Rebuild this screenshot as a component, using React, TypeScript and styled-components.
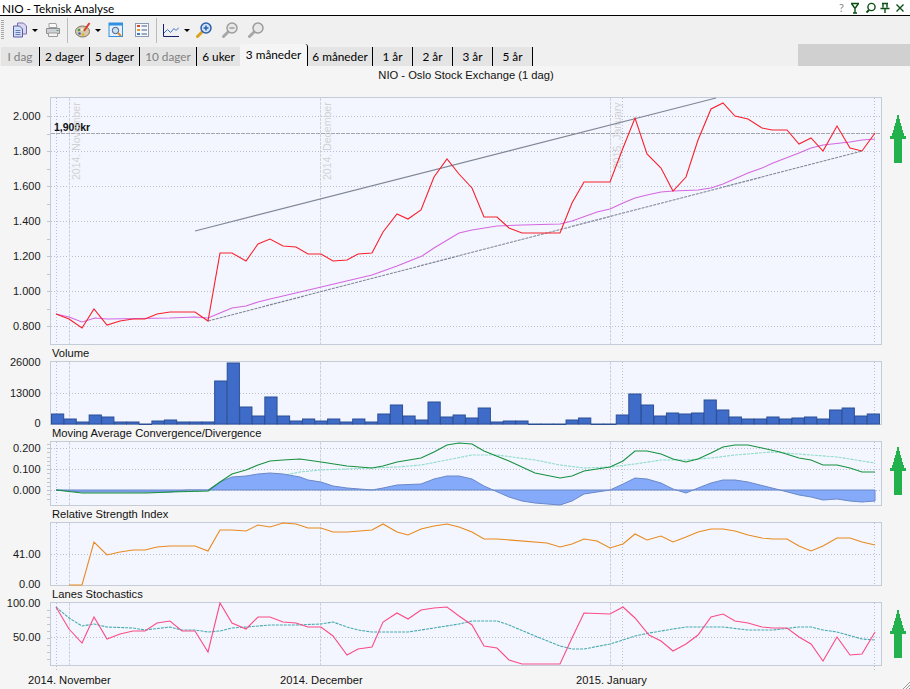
import React from "react";
import styled, { createGlobalStyle } from "styled-components";

const GlobalStyle = createGlobalStyle`
  html, body {
    margin: 0;
    padding: 0;
    background: #f5f5f5;
  }
`;

const Page = styled.div`
  width: 910px;
  height: 689px;
  overflow: hidden;
  position: relative;
  background: #f5f5f5;
  font-family: "Liberation Sans", Arial, sans-serif;
  font-size: 11.2px;
  color: #111;
`;

const TitleBar = styled.div`
  height: 15px;
  display: flex;
  align-items: center;
  background: #fff;
  border-bottom: 1px solid #000;
  padding-left: 2px;
  font-family: Lato, sans-serif;
  font-size: 11.7px;
  color: #000;
`;

const TitleText = styled.span`
  flex: 1;
`;

const WindowButtons = styled.div`
  display: flex;
  align-items: center;
  gap: 3px;
  padding-right: 4px;
`;

const HelpMark = styled.span`
  color: #888;
  font-size: 11px;
`;

const WinIcon = styled.svg<{ $left?: number }>`
  width: 12px;
  height: 12px;
  margin-left: ${(p) => p.$left ?? 0}px;
  fill: none;
  stroke: #0b4f12;
  stroke-width: 1.4;
`;

const Toolbar = styled.div`
  height: 28px;
  display: flex;
  align-items: center;
  background: #f0f0f0;
`;

const Grip = styled.div`
  width: 3px;
  height: 20px;
  margin-left: 1px;
  background: repeating-linear-gradient(to bottom, #a8a8a8 0 1px, transparent 1px 2px);
`;

const ToolIcon = styled.svg<{ $left: number }>`
  width: 16px;
  height: 16px;
  flex: none;
  margin-left: ${(p) => p.$left}px;
`;

const Caret = styled.span<{ $left: number }>`
  width: 0;
  height: 0;
  flex: none;
  margin-left: ${(p) => p.$left}px;
  border-left: 3px solid transparent;
  border-right: 3px solid transparent;
  border-top: 3px solid #000;
`;

const ToolSeparator = styled.div<{ $left: number }>`
  width: 1px;
  height: 25px;
  flex: none;
  margin-left: ${(p) => p.$left}px;
  background: #bcbcbc;
`;

const TabStrip = styled.div`
  height: 22px;
  display: flex;
  align-items: flex-end;
  padding-left: 1px;
  background: #f0f0f0;
`;

const Tab = styled.div<{ $width: number; $active?: boolean; $dim?: boolean; $noLine?: boolean }>`
  box-sizing: border-box;
  width: ${(p) => p.$width}px;
  height: ${(p) => (p.$active ? 22 : 19)}px;
  display: flex;
  align-items: center;
  justify-content: center;
  font-family: Lato, sans-serif;
  font-size: 11.8px;
  white-space: nowrap;
  background: ${(p) => (p.$active ? "#f5f5f5" : "#e4e4e4")};
  color: ${(p) => (p.$dim ? "#808080" : "#000")};
  border-right: ${(p) => (p.$noLine ? "none" : "1.5px solid #000")};
  border-radius: ${(p) => (p.$active ? "3px 3px 0 0" : "0")};
  padding-bottom: ${(p) => (p.$active ? 2 : 0)}px;
`;

const TabFiller = styled.div`
  width: 112px;
  height: 22px;
  margin-left: auto;
  background: #d0d0d0;
`;

const ChartTitle = styled.div`
  height: 31px;
  width: 832px;
  margin-left: 50px;
  padding-top: 2px;
  box-sizing: border-box;
  text-align: center;
  line-height: 14px;
  color: #111;
`;

const PanelRow = styled.div`
  display: grid;
  grid-template-columns: 50px 832px 28px;
`;

const Axis = styled.svg`
  width: 50px;
  display: block;
  overflow: visible;
  font-family: "Liberation Sans", Arial, sans-serif;
  font-size: 11px;
  fill: #1a1a1a;
`;

const Plot = styled.svg`
  width: 830px;
  display: block;
  overflow: visible;
  box-sizing: content-box;
  border: 1px solid #c4ccd9;
  background: #f3f6fe;
  font-family: "Liberation Sans", Arial, sans-serif;
`;

const ArrowCell = styled.div<{ $top: number }>`
  padding-top: ${(p) => p.$top}px;
  padding-left: 8px;
`;

const UpArrow = styled.svg`
  display: block;
  width: 16px;
  height: 48px;
  fill: #22b14c;
`;

const PanelLabel = styled.div`
  height: 16px;
  line-height: 16px;
  padding-left: 52px;
  color: #111;
`;

const DateAxis = styled.div`
  display: grid;
  grid-template-columns: 252px 296px auto;
  padding: 7px 0 0 28px;
  line-height: 14px;
  color: #111;
`;

const ResizeGrip = styled.svg`
  position: absolute;
  right: 0;
  bottom: 0;
  width: 7px;
  height: 7px;
  stroke: #9a9a9a;
  stroke-width: 1;
`;

const price =
  "56,314 69,319 82,328 94,309 107,325 120,321 133,319 145,319 157,314 170,312 182,312 195,312 208,321 220,253 232,253 246,261 258,244 270,239 283,246 296,247 308,254 321,254 333,261 347,260 358,254 372,253 383,232 397,214 408,219 421,210 434,177 447,159 459,174 472,188 484,217 497,217 509,228 522,233 560,233 572,203 584,182 610,182 623,148 635,118 647,154 661,168 673,191 686,177 698,140 711,109 723,103 735,116 748,119 762,128 772,130 787,130 799,144 811,138 823,151 837,126 850,148 862,151 875,133";
const priceAvg =
  "56,314 69,317 82,322 95,318 107,319 170,318 195,317 208,318 220,313 232,308 246,306 258,302 270,299 283,296 300,292 372,275 397,266 422,256 434,248 459,233 472,230 497,226 522,225 560,224 572,221 597,212 610,209 623,203 635,198 647,195 661,192 673,191 698,190 711,188 723,184 748,173 762,168 773,163 799,153 811,148 823,145 850,142 862,140 875,139";
const macdArea =
  "56,490 82,492 170,492 187,490 208,490 220,482 232,477 246,476 258,474 270,473 283,474 300,477 308,480 321,482 333,486 347,488 372,490 383,488 397,485 421,484 434,479 447,476 459,476 472,479 484,486 493,490 509,497 522,501 535,503 560,505 572,501 584,494 597,492 610,490 623,484 635,478 647,479 661,483 673,489 686,493 698,488 711,483 723,480 735,480 748,482 780,490 799,495 811,497 823,500 837,499 850,501 862,502 875,501 875,490 56,490";
const macdLine =
  "56,490 82,493 103,493 147,493 170,492 208,491 220,482 232,474 246,470 258,465 270,461 283,460 300,459 321,462 347,466 372,468 383,466 397,462 421,458 434,452 447,445 459,443 472,444 484,451 509,461 535,473 560,478 572,476 584,471 610,467 623,461 635,451 647,451 661,454 673,459 686,462 698,459 711,453 723,447 735,445 748,445 762,448 780,452 799,458 811,460 823,465 837,465 850,468 862,472 875,472";
const macdSignal =
  "56,490 147,492 208,491 232,485 270,478 300,472 321,470 347,469 372,468 397,467 421,465 447,460 472,455 497,455 535,460 560,465 584,468 610,467 635,464 661,460 686,460 711,458 735,455 772,452 811,455 837,457 875,463";
const rsi =
  "69,585 82,585 94,542 107,555 120,552 133,550 145,550 157,547 170,546 195,546 208,551 220,530 232,530 246,531 258,525 270,527 283,523 296,524 308,528 321,528 333,532 347,532 372,530 383,524 397,532 408,535 421,529 434,526 447,524 459,527 472,532 484,539 497,539 547,543 560,547 572,544 584,539 597,541 610,548 623,544 635,534 647,540 661,536 673,542 686,537 698,532 711,529 723,529 735,531 748,535 762,538 773,539 787,539 799,546 811,551 823,546 837,538 850,538 862,542 875,545";
const stoch =
  "56,607 69,629 82,643 94,617 107,639 120,634 133,631 145,631 157,623 170,621 182,631 195,631 208,652 220,603 232,623 246,629 258,617 270,617 283,622 296,623 308,627 321,627 333,636 347,655 358,649 372,647 383,622 397,613 408,619 421,610 434,608 447,607 459,616 472,625 484,646 497,648 509,660 522,664 560,664 572,638 584,613 610,614 623,607 635,618 649,635 661,641 673,651 686,644 698,635 711,617 723,614 735,621 748,623 762,627 773,628 787,628 799,637 811,644 823,661 837,637 850,655 862,654 875,632";
const stochAvg =
  "56,607 69,618 82,626 94,624 107,627 133,628 145,630 170,627 182,630 195,630 208,632 220,631 232,628 246,627 270,625 296,625 321,624 333,622 347,627 358,630 372,632 408,632 434,628 459,624 472,621 497,621 509,625 535,636 560,646 572,649 584,649 610,644 623,640 635,636 649,633 673,629 686,627 723,627 748,630 773,630 799,627 811,627 823,630 837,632 862,639 875,640";

const volumeTops = [
  414, 419, 422, 415, 417, 422, 422, 424, 421, 420, 422, 422, 422, 381, 363, 407, 416, 397, 416, 421,
  419, 421, 419, 422, 419, 422, 414, 405, 416, 420, 402, 417, 415, 418, 408, 422, 421, 421,
  424, 424, 424, 420, 418, 424, 424,
  415, 394, 405, 416, 413, 414, 413, 400, 410, 417, 419, 419, 417, 419, 418, 417, 419, 410, 408, 416, 414,
];

const monthLines = [69, 320.5, 610.5];
const edgeLines = [56.5, 622.5, 874.5];

interface Tick {
  y: number;
  label: string;
}

interface ChartProps {
  top: number;
  height: number;
  ticks: Tick[];
  minor?: number[];
  grid: number[];
  arrowTop?: number;
  lineEnd?: number;
  children: React.ReactNode;
}

const Chart: React.FC<ChartProps> = ({ top, height, ticks, minor = [], grid, arrowTop, lineEnd, children }) => {
  const bottom = top + height - 1;
  const end = lineEnd ?? bottom;
  return (
    <PanelRow>
      <Axis viewBox={`0 ${top} 50 ${height}`} style={{ height }}>
        {minor.map((y) => (
          <line key={y} x1={47} x2={50} y1={y} y2={y} stroke="#c0c4cc" shapeRendering="crispEdges" />
        ))}
        {ticks.map((t) => (
          <text key={t.label} x={40.5} y={t.y + 3.5} textAnchor="end">
            {t.label}
          </text>
        ))}
      </Axis>
      <Plot viewBox={`51 ${top + 1} 830 ${height - 2}`} style={{ height: height - 2 }}>
        <g shapeRendering="crispEdges">
          {grid.map((y) => (
            <line key={y} x1={51} x2={881} y1={y} y2={y} stroke="#b9c0d4" strokeDasharray="1 2" />
          ))}
          {edgeLines.map((x) => (
            <line key={x} x1={x} x2={x} y1={top + 1} y2={end} stroke="#bcc2d2" strokeDasharray="1 2" />
          ))}
          {monthLines.map((x) => (
            <line key={x} x1={x} x2={x} y1={top + 1} y2={bottom} stroke="#cfd1d6" strokeDasharray="3 1" />
          ))}
        </g>
        {children}
      </Plot>
      {arrowTop !== undefined && (
        <ArrowCell $top={arrowTop}>
          <UpArrow viewBox="0 0 16 48" shapeRendering="crispEdges">
            <polygon points="8,0 9,0 9,4 10,4 10,8 11,8 11,11 12,11 12,15 13,15 13,18 14,18 14,21 16,21 16,24 12,24 12,48 4,48 4,24 0,24 0,21 2,21 2,18 3,18 3,15 4,15 4,11 5,11 5,8 6,8 6,4 7,4 7,0" />
          </UpArrow>
        </ArrowCell>
      )}
    </PanelRow>
  );
};

const Line: React.FC<{ points: string; color: string; dashed?: boolean }> = ({ points, color, dashed }) => (
  <polyline
    points={points}
    fill="none"
    stroke={color}
    strokeWidth={1.1}
    strokeDasharray={dashed ? "3 1" : undefined}
  />
);

const MonthMark: React.FC<{ x: number; y: number; label: string }> = ({ x, y, label }) => (
  <text transform={`translate(${x} ${y}) rotate(-90)`} fontSize={10.5} fill="#d2d2d4">
    {label}
  </text>
);

const range = (from: number, to: number, step: number) => {
  const out: number[] = [];
  for (let y = from; y <= to; y += step) out.push(Math.round(y) + 0.5);
  return out;
};

const ZoomGlass: React.FC<{ left: number; active?: boolean; sign?: "plus" | "minus" }> = ({ left, active, sign }) => {
  const rim = active ? "#2b5fa8" : "#9c9c9c";
  const lens = active ? "#cfe3fb" : "#e8e8e8";
  const handle = active ? "#d9a520" : "#a8a8a8";
  return (
    <ToolIcon $left={left} viewBox="0 0 16 16">
      <line x1="6" y1="10" x2="1.5" y2="14.5" stroke={handle} strokeWidth="3" strokeLinecap="round" />
      <circle cx="10" cy="6" r="5" fill={lens} stroke={rim} strokeWidth="1.5" />
      {sign && <line x1="7.5" y1="6" x2="12.5" y2="6" stroke={rim} strokeWidth="1.5" />}
      {sign === "plus" && <line x1="10" y1="3.5" x2="10" y2="8.5" stroke={rim} strokeWidth="1.5" />}
    </ToolIcon>
  );
};

const tabs = [
  { label: "I dag", width: 39, dim: true },
  { label: "2 dager", width: 50 },
  { label: "5 dager", width: 50 },
  { label: "10 dager", width: 57, dim: true },
  { label: "6 uker", width: 43, noLine: true },
  { label: "3 måneder", width: 68, active: true },
  { label: "6 måneder", width: 65 },
  { label: "1 år", width: 40 },
  { label: "2 år", width: 40 },
  { label: "3 år", width: 40 },
  { label: "5 år", width: 40 },
];

export default function App() {
  return (
    <Page>
      <GlobalStyle />
      <TitleBar>
        <TitleText>NIO - Teknisk Analyse</TitleText>
        <WindowButtons>
          <HelpMark>?</HelpMark>
          <WinIcon viewBox="0 0 12 12" $left={2}>
            <path d="M2 1.5h8M2.5 1.5l3.5 5 3.5-5M6 6.5v4.5M4 11h4" />
          </WinIcon>
          <WinIcon viewBox="0 0 12 12" $left={1}>
            <circle cx="6.5" cy="5" r="3.6" />
            <path d="M4 8l-2.5 2.5" strokeWidth="2" />
          </WinIcon>
          <WinIcon viewBox="0 0 12 12" $left={-1}>
            <path d="M3 1.5h6M4 1.5v4M8 1.5v4M1.5 6.5h9M6 6.5v4.5" />
          </WinIcon>
          <WinIcon viewBox="0 0 12 12">
            <path d="M2.5 2.5l7 7M9.5 2.5l-7 7" />
          </WinIcon>
        </WindowButtons>
      </TitleBar>

      <Toolbar>
        <Grip />
        <ToolIcon $left={8} viewBox="0 0 16 16">
          <path d="M5.5 1h6l3 3v8h-9z" fill="#d9d6ef" stroke="#7a70b0" />
          <path d="M1.5 4h6l3 3v8h-9z" fill="#cfe0f5" stroke="#5f5aa8" />
          <path d="M3.5 8.5h5M3.5 10.5h5M3.5 12.5h5" stroke="#6a78b8" />
        </ToolIcon>
        <Caret $left={4} />
        <ToolIcon $left={7} viewBox="0 0 16 16">
          <path d="M4 1.5h7l1 4H4z" fill="#fafafa" stroke="#a0a0a0" />
          <path d="M1.5 6.5h13v5h-13z" fill="#cdd1d6" stroke="#8a8f96" />
          <path d="M3.5 11h9v3.5h-9z" fill="#f4f4f4" stroke="#9a9a9a" />
          <rect x="11.5" y="8" width="2" height="1" fill="#3fa84a" />
        </ToolIcon>
        <ToolSeparator $left={6} />
        <ToolIcon $left={7} viewBox="0 0 16 16">
          <ellipse cx="7.5" cy="9.5" rx="7" ry="5.5" fill="#d8c9a8" stroke="#7d7460" />
          <circle cx="4" cy="8" r="1.3" fill="#3f9c4a" />
          <circle cx="4.5" cy="11.5" r="1.3" fill="#3a62c0" />
          <circle cx="8" cy="12.5" r="1.3" fill="#e0b020" />
          <circle cx="7" cy="7.5" r="1.2" fill="#f2f2f2" />
          <path d="M9 9l5.5-8" stroke="#d8402c" strokeWidth="2" />
        </ToolIcon>
        <Caret $left={4} />
        <ToolIcon $left={7} viewBox="0 0 16 16">
          <rect x="1" y="1" width="13.5" height="13.5" fill="#e6f1fd" stroke="#2f8fe0" />
          <rect x="1" y="1" width="13.5" height="2.5" fill="#2f8fe0" />
          <circle cx="7.5" cy="8.5" r="3.2" fill="#c6e0f6" stroke="#4a5a78" />
          <path d="M10 11l3 3" stroke="#d88a20" strokeWidth="1.8" />
        </ToolIcon>
        <ToolIcon $left={10} viewBox="0 0 16 16">
          <rect x="1.5" y="1.5" width="13" height="13" fill="#f8f8fa" stroke="#8e9ab0" />
          <rect x="3" y="3" width="3" height="2" fill="#d84a30" />
          <rect x="3" y="7" width="3" height="2" fill="#d8a020" />
          <rect x="3" y="11" width="3" height="2" fill="#3a78c8" />
          <path d="M7.5 4h5.5M7.5 8h5.5M7.5 12h5.5" stroke="#3d5a8c" />
        </ToolIcon>
        <ToolSeparator $left={6} />
        <ToolIcon $left={6} viewBox="0 0 16 16">
          <path d="M0.5 2v12.5h16" fill="none" stroke="#14206e" />
          <path d="M1 11l3.5-3.5 3 3 3.5-4 2 2 3-3" fill="none" stroke="#3f6fd0" />
        </ToolIcon>
        <Caret $left={5} />
        <ZoomGlass left={6} active sign="plus" />
        <ZoomGlass left={10} sign="minus" />
        <ZoomGlass left={10} />
      </Toolbar>

      <TabStrip>
        {tabs.map((t) => (
          <Tab key={t.label} $width={t.width} $active={t.active} $dim={t.dim} $noLine={t.noLine}>
            {t.label}
          </Tab>
        ))}
        <TabFiller />
      </TabStrip>

      <ChartTitle>NIO - Oslo Stock Exchange (1 dag)</ChartTitle>

      <Chart
        top={97}
        height={248}
        arrowTop={18}
        grid={[116.5, 151.5, 186.5, 221.5, 256.5, 291.5, 326.5]}
        minor={range(116, 327, 17.5)}
        ticks={[
          { y: 116, label: "2.000" },
          { y: 151, label: "1.800" },
          { y: 186, label: "1.600" },
          { y: 221, label: "1.400" },
          { y: 256, label: "1.200" },
          { y: 291, label: "1.000" },
          { y: 326, label: "0.800" },
        ]}
      >
        <line x1={51} x2={881} y1={133.5} y2={133.5} stroke="#a4a6ae" strokeDasharray="4 1" shapeRendering="crispEdges" />
        <text x={54} y={131} fontSize={10.5} fontWeight="bold" fill="#111">
          1,900kr
        </text>
        <MonthMark x={80} y={180} label="2014. November" />
        <MonthMark x={331} y={180} label="2014. December" />
        <MonthMark x={621} y={169} label="2015. January" />
        <line x1={195} y1={231} x2={716} y2={98} stroke="#7f8797" strokeWidth={1.1} />
        <line x1={208} y1={321} x2={862} y2={151} stroke="#7f8797" strokeWidth={1.1} strokeDasharray="3 1" />
        <Line points={priceAvg} color="#d468e0" />
        <Line points={price} color="#f8202c" />
      </Chart>

      <PanelLabel>Volume</PanelLabel>
      <Chart
        top={361}
        height={64}
        grid={[393.5]}
        ticks={[
          { y: 362, label: "26000" },
          { y: 393, label: "13000" },
          { y: 423, label: "0" },
        ]}
      >
        {volumeTops.map((y, i) => (
          <rect
            key={i}
            x={51.5 + i * 12.55}
            y={y}
            width={12.2}
            height={Math.max(424 - y, 0.5)}
            fill="#3f6cc9"
            stroke="#2c4f96"
            strokeWidth={1}
          />
        ))}
      </Chart>

      <PanelLabel>Moving Average Convergence/Divergence</PanelLabel>
      <Chart
        top={441}
        height={65}
        arrowTop={6}
        grid={[448.5, 469.5, 490.5]}
        minor={range(444, 502, 4.2)}
        ticks={[
          { y: 448, label: "0.200" },
          { y: 469, label: "0.100" },
          { y: 490, label: "0.000" },
        ]}
      >
        <Line points={macdSignal} color="#90dccb" dashed />
        <polygon points={macdArea} fill="#84aaf9" stroke="#6a88c8" strokeWidth={1} />
        <Line points={macdLine} color="#17903f" />
      </Chart>

      <PanelLabel>Relative Strength Index</PanelLabel>
      <Chart
        top={522}
        height={64}
        grid={[554.5]}
        ticks={[
          { y: 554, label: "41.00" },
          { y: 584, label: "0.00" },
        ]}
      >
        <Line points={rsi} color="#e98a1e" />
      </Chart>

      <PanelLabel>Lanes Stochastics</PanelLabel>
      <Chart
        top={602}
        height={64}
        arrowTop={8}
        grid={[637.5]}
        lineEnd={672}
        minor={range(610, 660, 7)}
        ticks={[
          { y: 603, label: "100.00" },
          { y: 637, label: "50.00" },
        ]}
      >
        <Line points={stochAvg} color="#48aab0" dashed />
        <Line points={stoch} color="#fb4c86" />
      </Chart>

      <DateAxis>
        <span>2014. November</span>
        <span>2014. December</span>
        <span>2015. January</span>
      </DateAxis>

      <ResizeGrip viewBox="0 0 7 7">
        <path d="M7 0L0 7M7 3L3 7M7 6L6 7" />
      </ResizeGrip>
    </Page>
  );
}
